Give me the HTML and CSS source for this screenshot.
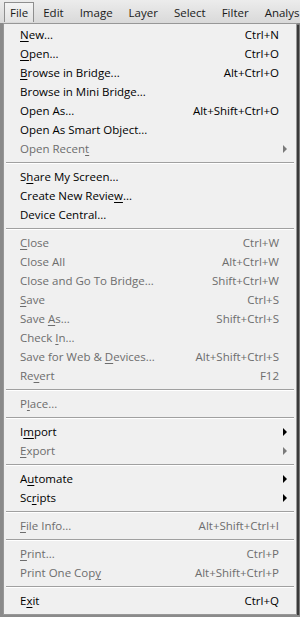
FILE: index.html
```html
<!DOCTYPE html>
<html lang="en">
<head>
    <meta charset="UTF-8">
    <meta name="viewport" content="width=device-width, initial-scale=1.0">
    <title>File Menu</title>
    <link rel="stylesheet" href="styles.css">
</head>
<body>
    <div class="menubar">
        <span class="bar-item active">File</span>
        <span class="bar-item">Edit</span>
        <span class="bar-item">Image</span>
        <span class="bar-item">Layer</span>
        <span class="bar-item">Select</span>
        <span class="bar-item">Filter</span>
        <span class="bar-item">Analys</span>
    </div>

    <div class="menu">
        <div class="item"><span><u>N</u>ew...</span><span class="key">Ctrl+N</span></div>
        <div class="item"><span><u>O</u>pen...</span><span class="key">Ctrl+O</span></div>
        <div class="item"><span><u>B</u>rowse in Bridge...</span><span class="key">Alt+Ctrl+O</span></div>
        <div class="item"><span>Browse in Mini Bridge...</span><span class="key"></span></div>
        <div class="item"><span>Open As...</span><span class="key">Alt+Shift+Ctrl+O</span></div>
        <div class="item"><span>Open As Smart Object...</span><span class="key"></span></div>
        <div class="item disabled sub"><span>Open Recen<u>t</u></span><span class="key"></span></div>
        <div class="sep"></div>
        <div class="item"><span>S<u>h</u>are My Screen...</span><span class="key"></span></div>
        <div class="item"><span>Create New Revie<u>w</u>...</span><span class="key"></span></div>
        <div class="item"><span>Device Central...</span><span class="key"></span></div>
        <div class="sep"></div>
        <div class="item disabled"><span><u>C</u>lose</span><span class="key">Ctrl+W</span></div>
        <div class="item disabled"><span>Close All</span><span class="key">Alt+Ctrl+W</span></div>
        <div class="item disabled"><span>Close and Go To Bridge...</span><span class="key">Shift+Ctrl+W</span></div>
        <div class="item disabled"><span><u>S</u>ave</span><span class="key">Ctrl+S</span></div>
        <div class="item disabled"><span>Save <u>A</u>s...</span><span class="key">Shift+Ctrl+S</span></div>
        <div class="item disabled"><span>Check <u>I</u>n...</span><span class="key"></span></div>
        <div class="item disabled"><span>Save for Web &amp; <u>D</u>evices...</span><span class="key">Alt+Shift+Ctrl+S</span></div>
        <div class="item disabled"><span>Re<u>v</u>ert</span><span class="key">F12</span></div>
        <div class="sep"></div>
        <div class="item disabled"><span>P<u>l</u>ace...</span><span class="key"></span></div>
        <div class="sep"></div>
        <div class="item sub"><span>I<u>m</u>port</span><span class="key"></span></div>
        <div class="item disabled sub"><span><u>E</u>xport</span><span class="key"></span></div>
        <div class="sep"></div>
        <div class="item sub"><span>A<u>u</u>tomate</span><span class="key"></span></div>
        <div class="item sub"><span>Sc<u>r</u>ipts</span><span class="key"></span></div>
        <div class="sep"></div>
        <div class="item disabled"><span><u>F</u>ile Info...</span><span class="key">Alt+Shift+Ctrl+I</span></div>
        <div class="sep"></div>
        <div class="item disabled"><span><u>P</u>rint...</span><span class="key">Ctrl+P</span></div>
        <div class="item disabled"><span>Print One Cop<u>y</u></span><span class="key">Alt+Shift+Ctrl+P</span></div>
        <div class="sep"></div>
        <div class="item"><span>E<u>x</u>it</span><span class="key">Ctrl+Q</span></div>
    </div>
</body>
</html>
```

FILE: styles.css
```css
body {
    margin: 0;
    background-color: #8a8a8a;
    font-family: "Open Sans", "Noto Sans", sans-serif;
    font-size: 11.5px;
    color: #000;
    overflow: hidden;
}

.menubar {
    display: flex;
    height: 23px;
    padding-left: 4px;
    background: linear-gradient(#ececec, #d9d9d9);
    white-space: nowrap;
    overflow: hidden;
}

.bar-item {
    padding: 3px 8px 0 8px;
    height: 17px;
    margin-top: 2px;
    color: #1a1a1a;
    font-size: 11.5px;
}

.bar-item.active {
    border: 1px solid #8e8e8e;
    border-bottom: none;
    background: linear-gradient(#f4f4f4, #e2e2e2);
    padding: 2px 5px 0 5px;
    margin-right: 1px;
}

.menu {
    width: 292px;
    margin-left: 3px;
    padding: 1px 0 4px 0;
    background-color: #f0f0f0;
    border: 1px solid #979797;
    box-shadow: 2px 2px 1px #3a3a3a;
}

.item {
    display: flex;
    justify-content: space-between;
    align-items: center;
    height: 19px;
    padding: 0 17px 0 16px;
    position: relative;
    white-space: nowrap;
}

.item.disabled {
    color: #6d6d6d;
}

.item u {
    text-decoration-thickness: 1px;
    text-underline-offset: 2px;
}

.key {
    text-align: right;
}

.item.sub::after {
    content: "";
    position: absolute;
    right: 9px;
    top: 6px;
    border-left: 4px solid #000;
    border-top: 4px solid transparent;
    border-bottom: 4px solid transparent;
}

.item.disabled.sub::after {
    border-left-color: #7a7a7a;
}

.sep {
    height: 1px;
    margin: 4px 2px 3px 2px;
    background-color: #a0a0a0;
    border-bottom: 1px solid #ffffff;
}
```
